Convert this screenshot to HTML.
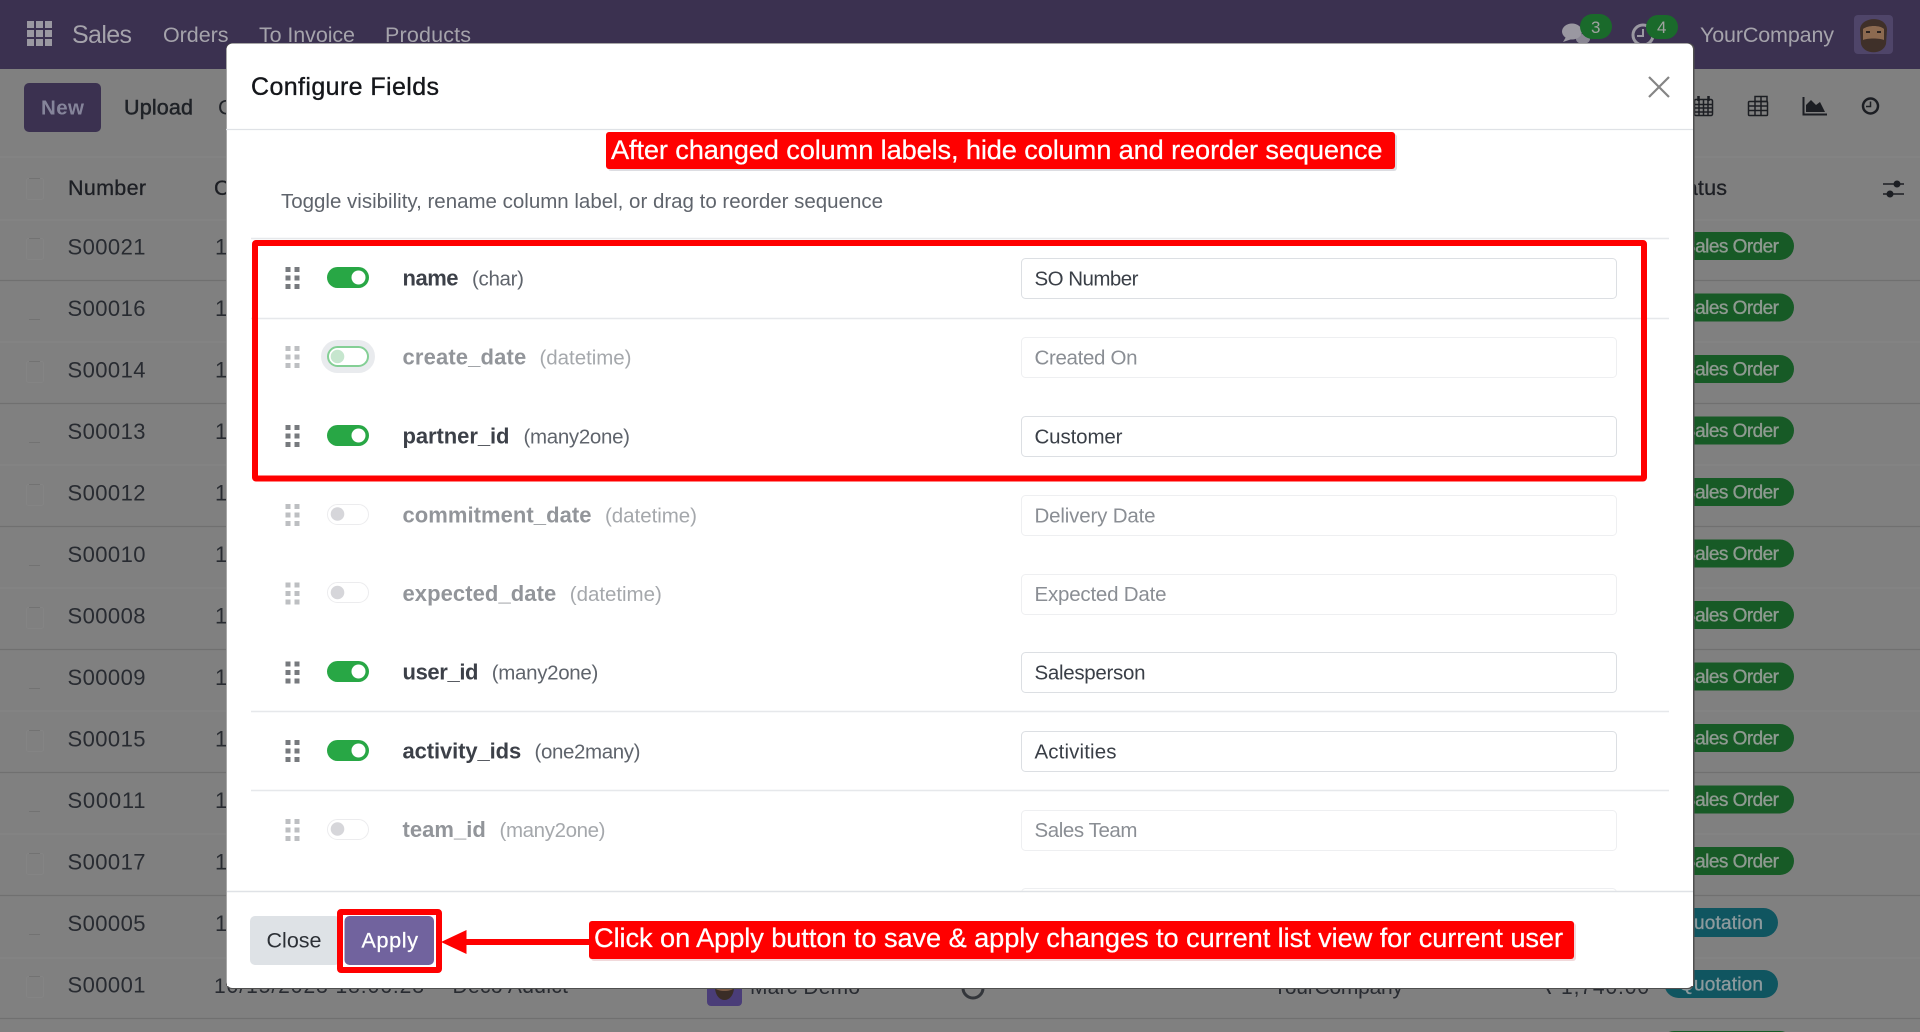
<!DOCTYPE html>
<html lang="en">
<head>
<meta charset="utf-8">
<title>Configure Fields</title>
<style>
html,body{margin:0;padding:0;width:1920px;height:1032px;overflow:hidden;background:#808080}
svg{display:block}
text{font-family:"Liberation Sans",sans-serif;font-size:20.5px;white-space:pre}
.nav{fill:#a5a3ab;font-size:21.5px}
.cell{fill:#282b31;font-size:22px}
.cellm{fill:#1d1f24;stroke:#1d1f24;stroke-width:.3px;font-size:21.5px}
.so{fill:#8f9a91;font-size:19px;stroke:#8f9a91;stroke-width:.35px}
.qu{fill:#8d9a9d;font-size:19px;stroke:#8d9a9d;stroke-width:.35px}
.b{font-weight:bold;fill:#3c4048;font-size:22px}
.t{fill:#5f646c;font-size:20.5px}
.bd{font-weight:bold;fill:#92959a;font-size:22px}
.td{fill:#a5a8ac;font-size:20.5px}
.i{fill:#3a3f47;font-size:20.5px}
.id{fill:#8a8e94;font-size:20.5px}
.red{fill:#fff;font-size:27.2px;stroke:#fff;stroke-width:.25px}
.hs{fill:#777a7e}
.hd{fill:#bdbfc2}
.l{stroke:#e6e8eb;stroke-width:1.5}
.s{stroke:#707070;stroke-width:1.2}
.f{stroke:#868686;stroke-width:1}
</style>
</head>
<body>
<svg xmlns="http://www.w3.org/2000/svg" width="1920" height="1032" viewBox="0 0 1920 1032">
<!-- page backdrop -->
<rect width="1920" height="1032" fill="#808080"/>
<!-- navbar -->
<rect width="1920" height="69" fill="#3b3150"/>
<g fill="#9a98a1">
<rect x="27" y="21" width="7" height="7"/><rect x="36" y="21" width="7" height="7"/><rect x="45" y="21" width="7" height="7"/>
<rect x="27" y="30" width="7" height="7"/><rect x="36" y="30" width="7" height="7"/><rect x="45" y="30" width="7" height="7"/>
<rect x="27" y="39" width="7" height="7"/><rect x="36" y="39" width="7" height="7"/><rect x="45" y="39" width="7" height="7"/>
</g>
<text class="nav" x="72" y="43" textLength="60" style="font-size:25px">Sales</text>
<text class="nav" x="163" y="42" textLength="65.5">Orders</text>
<text class="nav" x="259" y="42" textLength="96">To Invoice</text>
<text class="nav" x="385" y="42" textLength="86">Products</text>
<!-- systray -->
<ellipse cx="1583" cy="39" rx="7" ry="5" fill="#8a8794"/>
<ellipse cx="1572" cy="31.5" rx="10" ry="8" fill="#9a98a1"/>
<path d="M1566 37 L1563 42 L1572 39 Z" fill="#9a98a1"/>
<rect x="1580" y="14" width="32" height="25" rx="12.5" fill="#1a6a2b"/>
<text x="1591" y="33" style="font-size:17px;fill:#a0a2a0">3</text>
<circle cx="1643" cy="35" r="10" fill="none" stroke="#9a98a1" stroke-width="3"/>
<path d="M1643 29 V36 H1637" fill="none" stroke="#9a98a1" stroke-width="2"/>
<rect x="1646" y="15" width="32" height="24" rx="12" fill="#1a6a2b"/>
<text x="1657" y="33" style="font-size:17px;fill:#a0a2a0">4</text>
<text class="nav" x="1700" y="42" textLength="134">YourCompany</text>
<rect x="1854" y="15" width="39" height="39" rx="4" fill="#4f4569"/>
<path d="M1860 30 C1860 16 1887 15 1887 30 L1886 44 C1883 55 1864 55 1861 44 Z" fill="#3f3029"/>
<path d="M1863 29 C1868 25 1880 25 1884 29 L1884 40 C1880 38 1867 38 1863 40 Z" fill="#8c6a50"/>
<rect x="1866" y="31" width="4" height="2" fill="#2a2220"/><rect x="1877" y="31" width="4" height="2" fill="#2a2220"/>
<!-- control panel -->
<rect x="24" y="83" width="77" height="49" rx="5" fill="#3b3150"/>
<text x="41" y="114.500" textLength="43" style="fill:#85849a;font-weight:bold">New</text>
<text x="124" y="114.500" textLength="69" style="fill:#1f2227;stroke:#1f2227;stroke-width:.5px;font-size:21.500px">Upload</text>
<text x="218" y="114.500" style="fill:#1f2227;font-size:21.500px">C</text>
<!-- view switcher icons -->
<g fill="none" stroke="#1c1e23" stroke-width="1.5">
<rect x="1694.5" y="99.5" width="18" height="16" rx="1.5"/>
<path d="M1694.5 104.5h18M1694.5 108h18M1694.5 112h18M1699 100v15M1703.5 100v15M1708 100v15"/>
<path d="M1698.5 96v5M1708.5 96v5" stroke-width="2.5"/>
<rect x="1748.5" y="101.5" width="19" height="14" rx="1"/>
<path d="M1748.5 106h19M1748.5 110.500h19M1755 102v14M1761 96v20"/>
<path d="M1755 96.500h12v5h-12z"/>
<path d="M1803.500 97v17.500H1827" stroke-width="2"/>
</g>
<path d="M1806 112V105L1811 100L1816 105L1820 102L1825 112Z" fill="#1c1e23"/>
<circle cx="1870.500" cy="106" r="7.500" fill="none" stroke="#1c1e23" stroke-width="2.500"/>
<path d="M1870.500 101.500V106.500H1866" fill="none" stroke="#1c1e23" stroke-width="1.500"/>
<!-- table lines -->
<g>
<line class="f" x1="0" x2="1920" y1="157" y2="157"/>
<line class="f" x1="0" x2="1920" y1="220" y2="220"/>
<line class="s" x1="0" x2="1920" y1="280.500" y2="280.500"/>
<line class="f" x1="0" x2="1920" y1="342" y2="342"/>
<line class="s" x1="0" x2="1920" y1="403.500" y2="403.500"/>
<line class="f" x1="0" x2="1920" y1="465" y2="465"/>
<line class="s" x1="0" x2="1920" y1="526.500" y2="526.500"/>
<line class="f" x1="0" x2="1920" y1="588" y2="588"/>
<line class="s" x1="0" x2="1920" y1="649.500" y2="649.500"/>
<line class="f" x1="0" x2="1920" y1="711" y2="711"/>
<line class="s" x1="0" x2="1920" y1="772.500" y2="772.500"/>
<line class="f" x1="0" x2="1920" y1="834" y2="834"/>
<line class="s" x1="0" x2="1920" y1="895.500" y2="895.500"/>
<line class="f" x1="0" x2="1920" y1="958" y2="958"/>
<line class="s" x1="0" x2="1920" y1="1018.500" y2="1018.500"/>
</g>
<!-- checkboxes -->
<g fill="none" stroke="#848484">
<rect x="26.500" y="178.500" width="17" height="21" rx="2" />
<rect x="26.500" y="238.500" width="17" height="21" rx="2"/>
<rect x="26.500" y="361.500" width="17" height="21" rx="2"/>
<rect x="26.500" y="484.500" width="17" height="21" rx="2"/>
<rect x="26.500" y="607.500" width="17" height="21" rx="2"/>
<rect x="26.500" y="730.500" width="17" height="21" rx="2"/>
<rect x="26.500" y="853.500" width="17" height="21" rx="2"/>
<rect x="26.500" y="976.500" width="17" height="21" rx="2"/>
</g>
<g stroke="#727272" stroke-width="1">
<path d="M29 178.500h11M29 238.500h11M29 319.500h11M29 361.500h11M29 442.500h11M29 484.500h11M29 565.500h11M29 607.500h11M29 688.500h11M29 730.500h11M29 811.500h11M29 853.500h11M29 934.500h11M29 976.500h11"/>
</g>
<!-- table header -->
<text class="cellm" x="68" y="195" textLength="78">Number</text>
<text class="cellm" x="214" y="195">C</text>
<text class="cellm" x="1665" y="195" textLength="62">Status</text>
<g fill="none" stroke="#1c1e23" stroke-width="1.500"><path d="M1883 184h21M1883 194h21"/></g>
<circle cx="1897" cy="184" r="3.500" fill="#1c1e23"/><circle cx="1890" cy="194" r="3.500" fill="#1c1e23"/>
<!-- table rows -->
<g>
<text class="cell" x="67.500" y="254.300" textLength="78">S00021</text><text class="cell" x="215" y="254.300">1</text>
<text class="cell" x="67.500" y="315.800" textLength="78">S00016</text><text class="cell" x="215" y="315.800">1</text>
<text class="cell" x="67.500" y="377.300" textLength="78">S00014</text><text class="cell" x="215" y="377.300">1</text>
<text class="cell" x="67.500" y="438.800" textLength="78">S00013</text><text class="cell" x="215" y="438.800">1</text>
<text class="cell" x="67.500" y="500.300" textLength="78">S00012</text><text class="cell" x="215" y="500.300">1</text>
<text class="cell" x="67.500" y="561.800" textLength="78">S00010</text><text class="cell" x="215" y="561.800">1</text>
<text class="cell" x="67.500" y="623.300" textLength="78">S00008</text><text class="cell" x="215" y="623.300">1</text>
<text class="cell" x="67.500" y="684.800" textLength="78">S00009</text><text class="cell" x="215" y="684.800">1</text>
<text class="cell" x="67.500" y="746.300" textLength="78">S00015</text><text class="cell" x="215" y="746.300">1</text>
<text class="cell" x="67.500" y="807.800" textLength="78">S00011</text><text class="cell" x="215" y="807.800">1</text>
<text class="cell" x="67.500" y="869.300" textLength="78">S00017</text><text class="cell" x="215" y="869.300">1</text>
<text class="cell" x="67.500" y="930.800" textLength="78">S00005</text><text class="cell" x="215" y="930.800">1</text>
<text class="cell" x="67.500" y="992.300" textLength="78">S00001</text>
<text class="cell" x="214" y="993" textLength="210" style="font-size:21px">10/15/2023 18:06:23</text>
<text class="cell" x="452.500" y="993" textLength="115.500" style="font-size:21px">Deco Addict</text>
<rect x="707" y="970" width="35" height="36" rx="4" fill="#4a3d78"/>
<ellipse cx="724.500" cy="984" rx="10" ry="14" fill="#7a5a45"/>
<path d="M715 988C718 992 731 992 734 988C733 1004 716 1004 715 988Z" fill="#3a2d27"/>
<text class="cell" x="750" y="994" textLength="110" style="font-size:21px">Marc Demo</text>
<circle cx="973" cy="988" r="10" fill="none" stroke="#33363b" stroke-width="3"/>
<text class="cell" x="1273" y="994" textLength="130" style="font-size:21px">YourCompany</text>
<text class="cell" x="1540" y="994" textLength="109" style="font-size:21px">₹ 1,740.00</text>
</g>
<!-- status badges -->
<g fill="#175a26">
<rect x="1660" y="232" width="134" height="28" rx="14"/>
<rect x="1660" y="293.500" width="134" height="28" rx="14"/>
<rect x="1660" y="355" width="134" height="28" rx="14"/>
<rect x="1660" y="416.500" width="134" height="28" rx="14"/>
<rect x="1660" y="478" width="134" height="28" rx="14"/>
<rect x="1660" y="539.500" width="134" height="28" rx="14"/>
<rect x="1660" y="601" width="134" height="28" rx="14"/>
<rect x="1660" y="662.500" width="134" height="28" rx="14"/>
<rect x="1660" y="724" width="134" height="28" rx="14"/>
<rect x="1660" y="785.500" width="134" height="28" rx="14"/>
<rect x="1660" y="847" width="134" height="28" rx="14"/>
<rect x="1660" y="1031" width="134" height="28" rx="14"/>
</g>
<rect x="1664.500" y="908" width="113.500" height="29" rx="14.500" fill="#105560"/>
<rect x="1664.500" y="970" width="113.500" height="28" rx="14" fill="#105560"/>
<g>
<text class="so" x="1683" y="252.500" textLength="96">Sales Order</text>
<text class="so" x="1683" y="314" textLength="96">Sales Order</text>
<text class="so" x="1683" y="375.500" textLength="96">Sales Order</text>
<text class="so" x="1683" y="437" textLength="96">Sales Order</text>
<text class="so" x="1683" y="498.500" textLength="96">Sales Order</text>
<text class="so" x="1683" y="560" textLength="96">Sales Order</text>
<text class="so" x="1683" y="621.500" textLength="96">Sales Order</text>
<text class="so" x="1683" y="683" textLength="96">Sales Order</text>
<text class="so" x="1683" y="744.500" textLength="96">Sales Order</text>
<text class="so" x="1683" y="806" textLength="96">Sales Order</text>
<text class="so" x="1683" y="867.500" textLength="96">Sales Order</text>
<text class="qu" x="1679" y="929" textLength="84">Quotation</text>
<text class="qu" x="1679" y="990.500" textLength="84">Quotation</text>
</g>

<!-- modal -->
<rect x="226" y="43" width="1468.500" height="946" rx="6" fill="#4f4f4f"/>
<rect x="226.500" y="43.500" width="1466.500" height="944.500" rx="6" fill="#fff"/>
<text x="251" y="95" textLength="188" style="font-size:25px;fill:#14161a;stroke:#14161a;stroke-width:.35px">Configure Fields</text>
<path d="M1649 77L1669 97M1669 77L1649 97" stroke="#858585" stroke-width="2.200" fill="none"/>
<line x1="226" x2="1693" y1="129.500" y2="129.500" stroke="#dfe2e6" stroke-width="1.200"/>
<text class="t" x="281" y="208" textLength="602">Toggle visibility, rename column label, or drag to reorder sequence</text>
<line class="l" x1="251" x2="1669" y1="238.500" y2="238.500"/>
<line class="l" x1="251" x2="1669" y1="318.500" y2="318.500"/>
<line class="l" x1="251" x2="1669" y1="711.500" y2="711.500"/>
<line class="l" x1="251" x2="1669" y1="790.500" y2="790.500"/>

<!-- inputs -->
<g fill="#fff">
<rect x="1021.500" y="258.500" width="595" height="40" rx="4" stroke="#dcdfe3"/>
<rect x="1021.500" y="337.500" width="595" height="40" rx="4" stroke="#eeeff1"/>
<rect x="1021.500" y="416.500" width="595" height="40" rx="4" stroke="#dcdfe3"/>
<rect x="1021.500" y="495.500" width="595" height="40" rx="4" stroke="#eeeff1"/>
<rect x="1021.500" y="574.500" width="595" height="40" rx="4" stroke="#eeeff1"/>
<rect x="1021.500" y="652.500" width="595" height="40" rx="4" stroke="#dcdfe3"/>
<rect x="1021.500" y="731.500" width="595" height="40" rx="4" stroke="#dcdfe3"/>
<rect x="1021.500" y="810.500" width="595" height="40" rx="4" stroke="#eeeff1"/>
<rect x="1021.500" y="888.500" width="595" height="40" rx="4" stroke="#eeeff1"/>
</g>
<text class="i" x="1034.500" y="285.500" textLength="104">SO Number</text>
<text class="id" x="1034.500" y="364.500" textLength="103">Created On</text>
<text class="i" x="1034.500" y="443.500" textLength="88">Customer</text>
<text class="id" x="1034.500" y="522.500" textLength="121">Delivery Date</text>
<text class="id" x="1034.500" y="601" textLength="132">Expected Date</text>
<text class="i" x="1034.500" y="679.500" textLength="111">Salesperson</text>
<text class="i" x="1034.500" y="758.500" textLength="82">Activities</text>
<text class="id" x="1034.500" y="837" textLength="103">Sales Team</text>

<!-- field names -->
<text class="b" x="402.500" y="285.500" textLength="56">name</text><text class="t" x="472" y="285.500" textLength="52">(char)</text>
<text class="bd" x="402.500" y="364.500" textLength="123.700">create_date</text><text class="td" x="539.500" y="364.500" textLength="92">(datetime)</text>
<text class="b" x="402.500" y="443.500" textLength="107">partner_id</text><text class="t" x="523.500" y="443.500" textLength="106.500">(many2one)</text>
<text class="bd" x="402.500" y="522.500" textLength="189">commitment_date</text><text class="td" x="605" y="522.500" textLength="92">(datetime)</text>
<text class="bd" x="402.500" y="601" textLength="153.700">expected_date</text><text class="td" x="569.800" y="601" textLength="92">(datetime)</text>
<text class="b" x="402.500" y="679.500" textLength="76">user_id</text><text class="t" x="491.800" y="679.500" textLength="106.500">(many2one)</text>
<text class="b" x="402.500" y="758.500" textLength="118.700">activity_ids</text><text class="t" x="534.500" y="758.500" textLength="106">(one2many)</text>
<text class="bd" x="402.500" y="837" textLength="83.300">team_id</text><text class="td" x="499.500" y="837" textLength="106">(many2one)</text>

<!-- drag handles -->
<g class="hs">
<g transform="translate(0,267)"><rect x="285.500" width="5" height="5"/><rect x="294.500" width="5" height="5"/><rect x="285.500" y="8.500" width="5" height="5"/><rect x="294.500" y="8.500" width="5" height="5"/><rect x="285.500" y="17" width="5" height="5"/><rect x="294.500" y="17" width="5" height="5"/></g>
<g transform="translate(0,425)"><rect x="285.500" width="5" height="5"/><rect x="294.500" width="5" height="5"/><rect x="285.500" y="8.500" width="5" height="5"/><rect x="294.500" y="8.500" width="5" height="5"/><rect x="285.500" y="17" width="5" height="5"/><rect x="294.500" y="17" width="5" height="5"/></g>
<g transform="translate(0,661.500)"><rect x="285.500" width="5" height="5"/><rect x="294.500" width="5" height="5"/><rect x="285.500" y="8.500" width="5" height="5"/><rect x="294.500" y="8.500" width="5" height="5"/><rect x="285.500" y="17" width="5" height="5"/><rect x="294.500" y="17" width="5" height="5"/></g>
<g transform="translate(0,740)"><rect x="285.500" width="5" height="5"/><rect x="294.500" width="5" height="5"/><rect x="285.500" y="8.500" width="5" height="5"/><rect x="294.500" y="8.500" width="5" height="5"/><rect x="285.500" y="17" width="5" height="5"/><rect x="294.500" y="17" width="5" height="5"/></g>
</g>
<g class="hd">
<g transform="translate(0,346)"><rect x="285.500" width="5" height="5"/><rect x="294.500" width="5" height="5"/><rect x="285.500" y="8.500" width="5" height="5"/><rect x="294.500" y="8.500" width="5" height="5"/><rect x="285.500" y="17" width="5" height="5"/><rect x="294.500" y="17" width="5" height="5"/></g>
<g transform="translate(0,504)"><rect x="285.500" width="5" height="5"/><rect x="294.500" width="5" height="5"/><rect x="285.500" y="8.500" width="5" height="5"/><rect x="294.500" y="8.500" width="5" height="5"/><rect x="285.500" y="17" width="5" height="5"/><rect x="294.500" y="17" width="5" height="5"/></g>
<g transform="translate(0,582.500)"><rect x="285.500" width="5" height="5"/><rect x="294.500" width="5" height="5"/><rect x="285.500" y="8.500" width="5" height="5"/><rect x="294.500" y="8.500" width="5" height="5"/><rect x="285.500" y="17" width="5" height="5"/><rect x="294.500" y="17" width="5" height="5"/></g>
<g transform="translate(0,819)"><rect x="285.500" width="5" height="5"/><rect x="294.500" width="5" height="5"/><rect x="285.500" y="8.500" width="5" height="5"/><rect x="294.500" y="8.500" width="5" height="5"/><rect x="285.500" y="17" width="5" height="5"/><rect x="294.500" y="17" width="5" height="5"/></g>
</g>

<!-- toggles on -->
<g fill="#28a745">
<rect x="327" y="267" width="42" height="21" rx="10.500"/>
<rect x="327" y="425" width="42" height="21" rx="10.500"/>
<rect x="327" y="661" width="42" height="21" rx="10.500"/>
<rect x="327" y="740" width="42" height="21" rx="10.500"/>
</g>
<g fill="#fff">
<circle cx="358.500" cy="277.500" r="7"/>
<circle cx="358.500" cy="435.500" r="7"/>
<circle cx="358.500" cy="671.500" r="7"/>
<circle cx="358.500" cy="750.500" r="7"/>
</g>
<!-- toggle focus -->
<rect x="321" y="340" width="54" height="33" rx="16.500" fill="#e9ebee"/>
<rect x="328" y="347" width="40" height="19" rx="9.500" fill="#fff" stroke="#84cf95" stroke-width="2"/>
<circle cx="337.500" cy="356.500" r="6.800" fill="#c6e6ce"/>
<!-- toggles off -->
<g fill="#fff" stroke="#ececee">
<rect x="327.500" y="504.500" width="41" height="20" rx="10"/>
<rect x="327.500" y="582.500" width="41" height="20" rx="10"/>
<rect x="327.500" y="819.500" width="41" height="20" rx="10"/>
</g>
<g fill="#d6d6da">
<circle cx="337.500" cy="514" r="6.800"/>
<circle cx="337.500" cy="592.500" r="6.800"/>
<circle cx="337.500" cy="829" r="6.800"/>
</g>

<!-- footer -->
<rect x="227" y="892" width="1466" height="94" fill="#fff"/>
<line x1="227" x2="1693" y1="891.500" y2="891.500" stroke="#dfe2e6" stroke-width="1.500"/>
<rect x="250" y="916" width="90" height="49" rx="5" fill="#dee2e6"/>
<text x="266.500" y="947.500" textLength="55" style="fill:#2c3036;font-size:21.500px">Close</text>
<rect x="340" y="912" width="99" height="58" fill="#fff"/>
<rect x="344.500" y="916" width="89.500" height="49" rx="5" fill="#71639e"/>
<text x="361.500" y="947.500" textLength="56.500" style="fill:#fff;stroke:#fff;stroke-width:.3px;font-size:21.500px">Apply</text>

<!-- annotations -->
<rect x="340" y="912" width="99" height="58" rx="1" fill="none" stroke="#ff0000" stroke-width="6"/>
<rect x="255" y="243" width="1389" height="235.500" rx="1" fill="none" stroke="#ff0000" stroke-width="6"/>
<path d="M441 942L466.500 930V939H589V945H466.500V954Z" fill="#ff0000"/>

<rect x="608" y="134" width="789" height="37" rx="3" fill="#dcdde2"/>
<rect x="606" y="132" width="789" height="37" rx="3" fill="#ff0000"/>
<text class="red" x="611" y="159" textLength="771.500">After changed column labels, hide column and reorder sequence</text>

<rect x="591" y="923" width="985" height="38" rx="3" fill="#f1d9db"/>
<rect x="589" y="921" width="985" height="38" rx="3" fill="#ff0000"/>
<text class="red" x="594" y="947" textLength="969">Click on Apply button to save &amp; apply changes to current list view for current user</text>
</svg>
</body>
</html>
